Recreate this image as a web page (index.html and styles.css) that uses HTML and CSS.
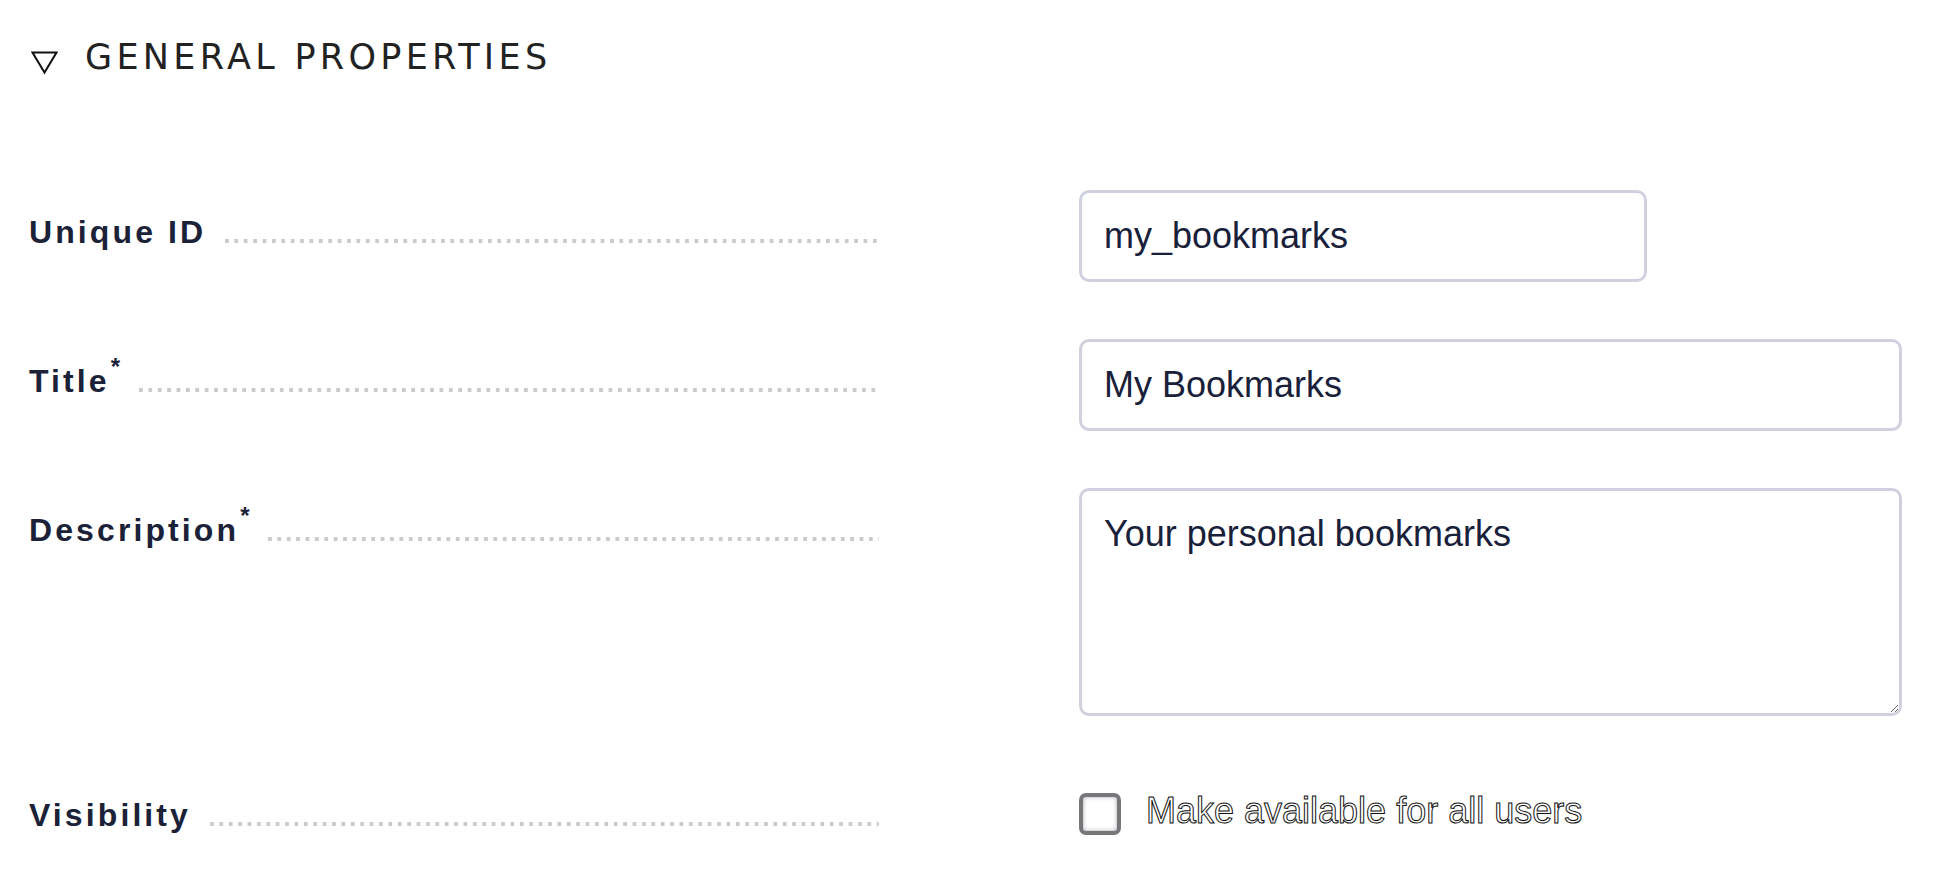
FILE: index.html
```html
<!DOCTYPE html>
<html lang="en">
<head>
<meta charset="utf-8">
<title>General properties</title>
<link rel="stylesheet" href="styles.css">
</head>
<body>
<section class="panel">
  <h2 class="panel-title">
    <svg class="toggle" width="27" height="24" viewBox="0 0 27 24" aria-hidden="true">
      <path d="M1.5 1.5 L25.5 1.5 L13.5 21.5 Z" fill="#fff" stroke="#111" stroke-width="2" stroke-linejoin="miter"/>
    </svg>
    <span>GENERAL PROPERTIES</span>
  </h2>
  <div class="form">
    <div class="row">
      <div class="label"><span class="label-text">Unique ID</span><span class="dots"></span></div>
      <div class="control"><input class="field field-short" type="text" value="my_bookmarks"></div>
    </div>
    <div class="row">
      <div class="label"><span class="label-text">Title<sup>*</sup></span><span class="dots"></span></div>
      <div class="control"><input class="field" type="text" value="My Bookmarks"></div>
    </div>
    <div class="row">
      <div class="label"><span class="label-text">Description<sup>*</sup></span><span class="dots"></span></div>
      <div class="control"><textarea class="field area">Your personal bookmarks</textarea></div>
    </div>
    <div class="row">
      <div class="label"><span class="label-text">Visibility</span><span class="dots"></span></div>
      <div class="control check-control">
        <input class="check" type="checkbox" id="vis">
        <label class="check-label" for="vis">Make available for all users</label>
      </div>
    </div>
  </div>
</section>
</body>
</html>
```

FILE: styles.css
```css
html, body {
  margin: 0;
  padding: 0;
  background: #ffffff;
}

body {
  font-family: "Liberation Sans", Arial, sans-serif;
}

.panel {
  padding: 36px 47px 0 29px;
}

.panel-title {
  display: flex;
  align-items: flex-start;
  margin: 0;
  font-family: "DejaVu Sans", sans-serif;
  font-weight: 400;
  font-size: 35px;
  line-height: 42px;
  letter-spacing: 4.3px;
  color: #222222;
}

.toggle {
  margin-left: 2px;
  margin-right: 27px;
  margin-top: 15px;
  flex: none;
}

.form {
  margin-top: 112px;
  display: flex;
  flex-direction: column;
  gap: 57px;
}

.row {
  display: grid;
  grid-template-columns: 850px 823px;
  column-gap: 200px;
}

.label {
  display: flex;
  align-items: baseline;
  padding-top: 18px;
  font-size: 32px;
  line-height: 48px;
  font-weight: 700;
  letter-spacing: 3.1px;
  color: #1b2238;
  height: 48px;
}

.label-text {
  white-space: nowrap;
}

.label-text sup {
  font-size: 24px;
  line-height: 0;
  letter-spacing: 0;
  vertical-align: 0;
  position: relative;
  top: -17px;
  margin-left: 1px;
}

.dots {
  flex: 1;
  display: inline-block;
  height: 4px;
  margin-left: 19px;
  margin-bottom: 1px;
  background-image: linear-gradient(to right, #cbcbcb 0 4px, transparent 4px 9.4px);
  background-size: 9.4px 4px;
  background-repeat: repeat-x;
}

.field {
  display: block;
  box-sizing: border-box;
  width: 100%;
  height: 92px;
  margin: 0;
  padding: 23px 22px;
  border: 3px solid #d0d1de;
  border-radius: 10px;
  font-family: "Liberation Sans", Arial, sans-serif;
  font-size: 36px;
  line-height: 40px;
  color: #18203a;
  background: #fff;
  outline: none;
}

.field-short {
  width: 568px;
}

.area {
  height: 228px;
  resize: both;
}

.check-control {
  display: flex;
  align-items: center;
  gap: 25px;
  padding-top: 20px;
  height: 42px;
}

.check {
  appearance: none;
  -webkit-appearance: none;
  box-sizing: border-box;
  width: 42px;
  height: 42px;
  margin: 0;
  border: 4px solid #75777b;
  border-radius: 7px;
  background: #fff;
  box-shadow: inset 0 0 4px rgba(0, 0, 0, 0.35);
  flex: none;
}

.check-label {
  font-family: "Liberation Sans", Arial, sans-serif;
  font-size: 36px;
  line-height: 42px;
  color: #ffffff;
  -webkit-text-stroke: 1px #111111;
  position: relative;
  top: -3px;
}
```
